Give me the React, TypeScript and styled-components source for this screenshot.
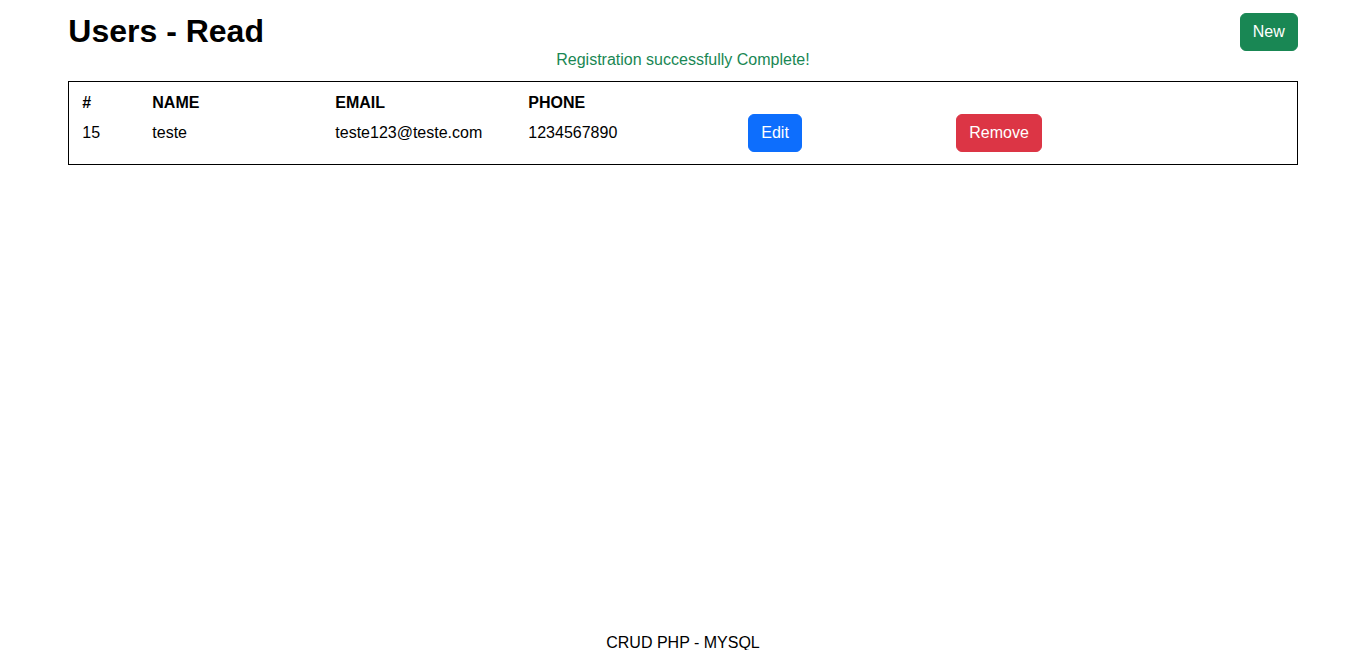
import React from "react";
import styled, { createGlobalStyle } from "styled-components";

const GlobalStyle = createGlobalStyle`
  html, body {
    margin: 0;
    padding: 0;
    background: #fff;
    font-family: "Liberation Sans", Arial, sans-serif;
    font-size: 16px;
    color: #000;
  }
  * { box-sizing: border-box; }
`;

const Page = styled.div`
  min-height: 100vh;
  display: flex;
  flex-direction: column;
`;

const Container = styled.main`
  width: 90%;
  margin: 0 auto;
  padding-top: 13px;
`;

const Header = styled.header`
  display: flex;
  justify-content: space-between;
  align-items: flex-start;
  height: 38px;
`;

const Title = styled.h1`
  margin: -1px 0 0 0;
  font-size: 32px;
  font-weight: 700;
  line-height: 38px;
`;

type Variant = "success" | "primary" | "danger";

const colors: Record<Variant, string> = {
  success: "#198754",
  primary: "#0d6efd",
  danger: "#dc3545",
};

const Button = styled.button<{ $variant: Variant }>`
  display: inline-block;
  font-family: "Liberation Sans", Arial, sans-serif;
  font-size: 16px;
  line-height: 24px;
  padding: 6px 12px;
  border: 1px solid ${(p) => colors[p.$variant]};
  border-radius: 6px;
  background: ${(p) => colors[p.$variant]};
  color: #fff;
  cursor: pointer;
  vertical-align: middle;
`;

const Message = styled.p`
  margin: 0;
  text-align: center;
  color: #198754;
  line-height: 18px;
`;

const TableBox = styled.div`
  margin-top: 12px;
  border: 1px solid #000;
  padding: 8px 13px 12px 13px;
`;

const Table = styled.table`
  width: 100%;
  table-layout: fixed;
  border-collapse: collapse;
`;

const HeadCell = styled.th`
  padding: 2px 0 0 0;
  text-align: left;
  font-weight: 700;
  line-height: 22px;
`;

const Cell = styled.td`
  padding: 0;
  line-height: 24px;
  vertical-align: middle;
`;

const Footer = styled.footer`
  margin-top: auto;
  text-align: center;
  line-height: 16px;
  height: 15px;
`;

const widths = [70, 183, 193, 220, 208];

export default function App() {
  return (
    <Page>
      <GlobalStyle />
      <Container>
        <Header>
          <Title>Users - Read</Title>
          <Button $variant="success">New</Button>
        </Header>
        <Message>Registration successfully Complete!</Message>
        <TableBox>
          <Table>
            <colgroup>
              {widths.map((w, i) => (
                <col key={i} style={{ width: w }} />
              ))}
              <col />
            </colgroup>
            <thead>
              <tr>
                <HeadCell>#</HeadCell>
                <HeadCell>NAME</HeadCell>
                <HeadCell>EMAIL</HeadCell>
                <HeadCell>PHONE</HeadCell>
                <HeadCell />
                <HeadCell />
              </tr>
            </thead>
            <tbody>
              <tr>
                <Cell>15</Cell>
                <Cell>teste</Cell>
                <Cell>teste123@teste.com</Cell>
                <Cell>1234567890</Cell>
                <Cell>
                  <Button $variant="primary">Edit</Button>
                </Cell>
                <Cell>
                  <Button $variant="danger">Remove</Button>
                </Cell>
              </tr>
            </tbody>
          </Table>
        </TableBox>
      </Container>
      <Footer>CRUD PHP - MYSQL</Footer>
    </Page>
  );
}
